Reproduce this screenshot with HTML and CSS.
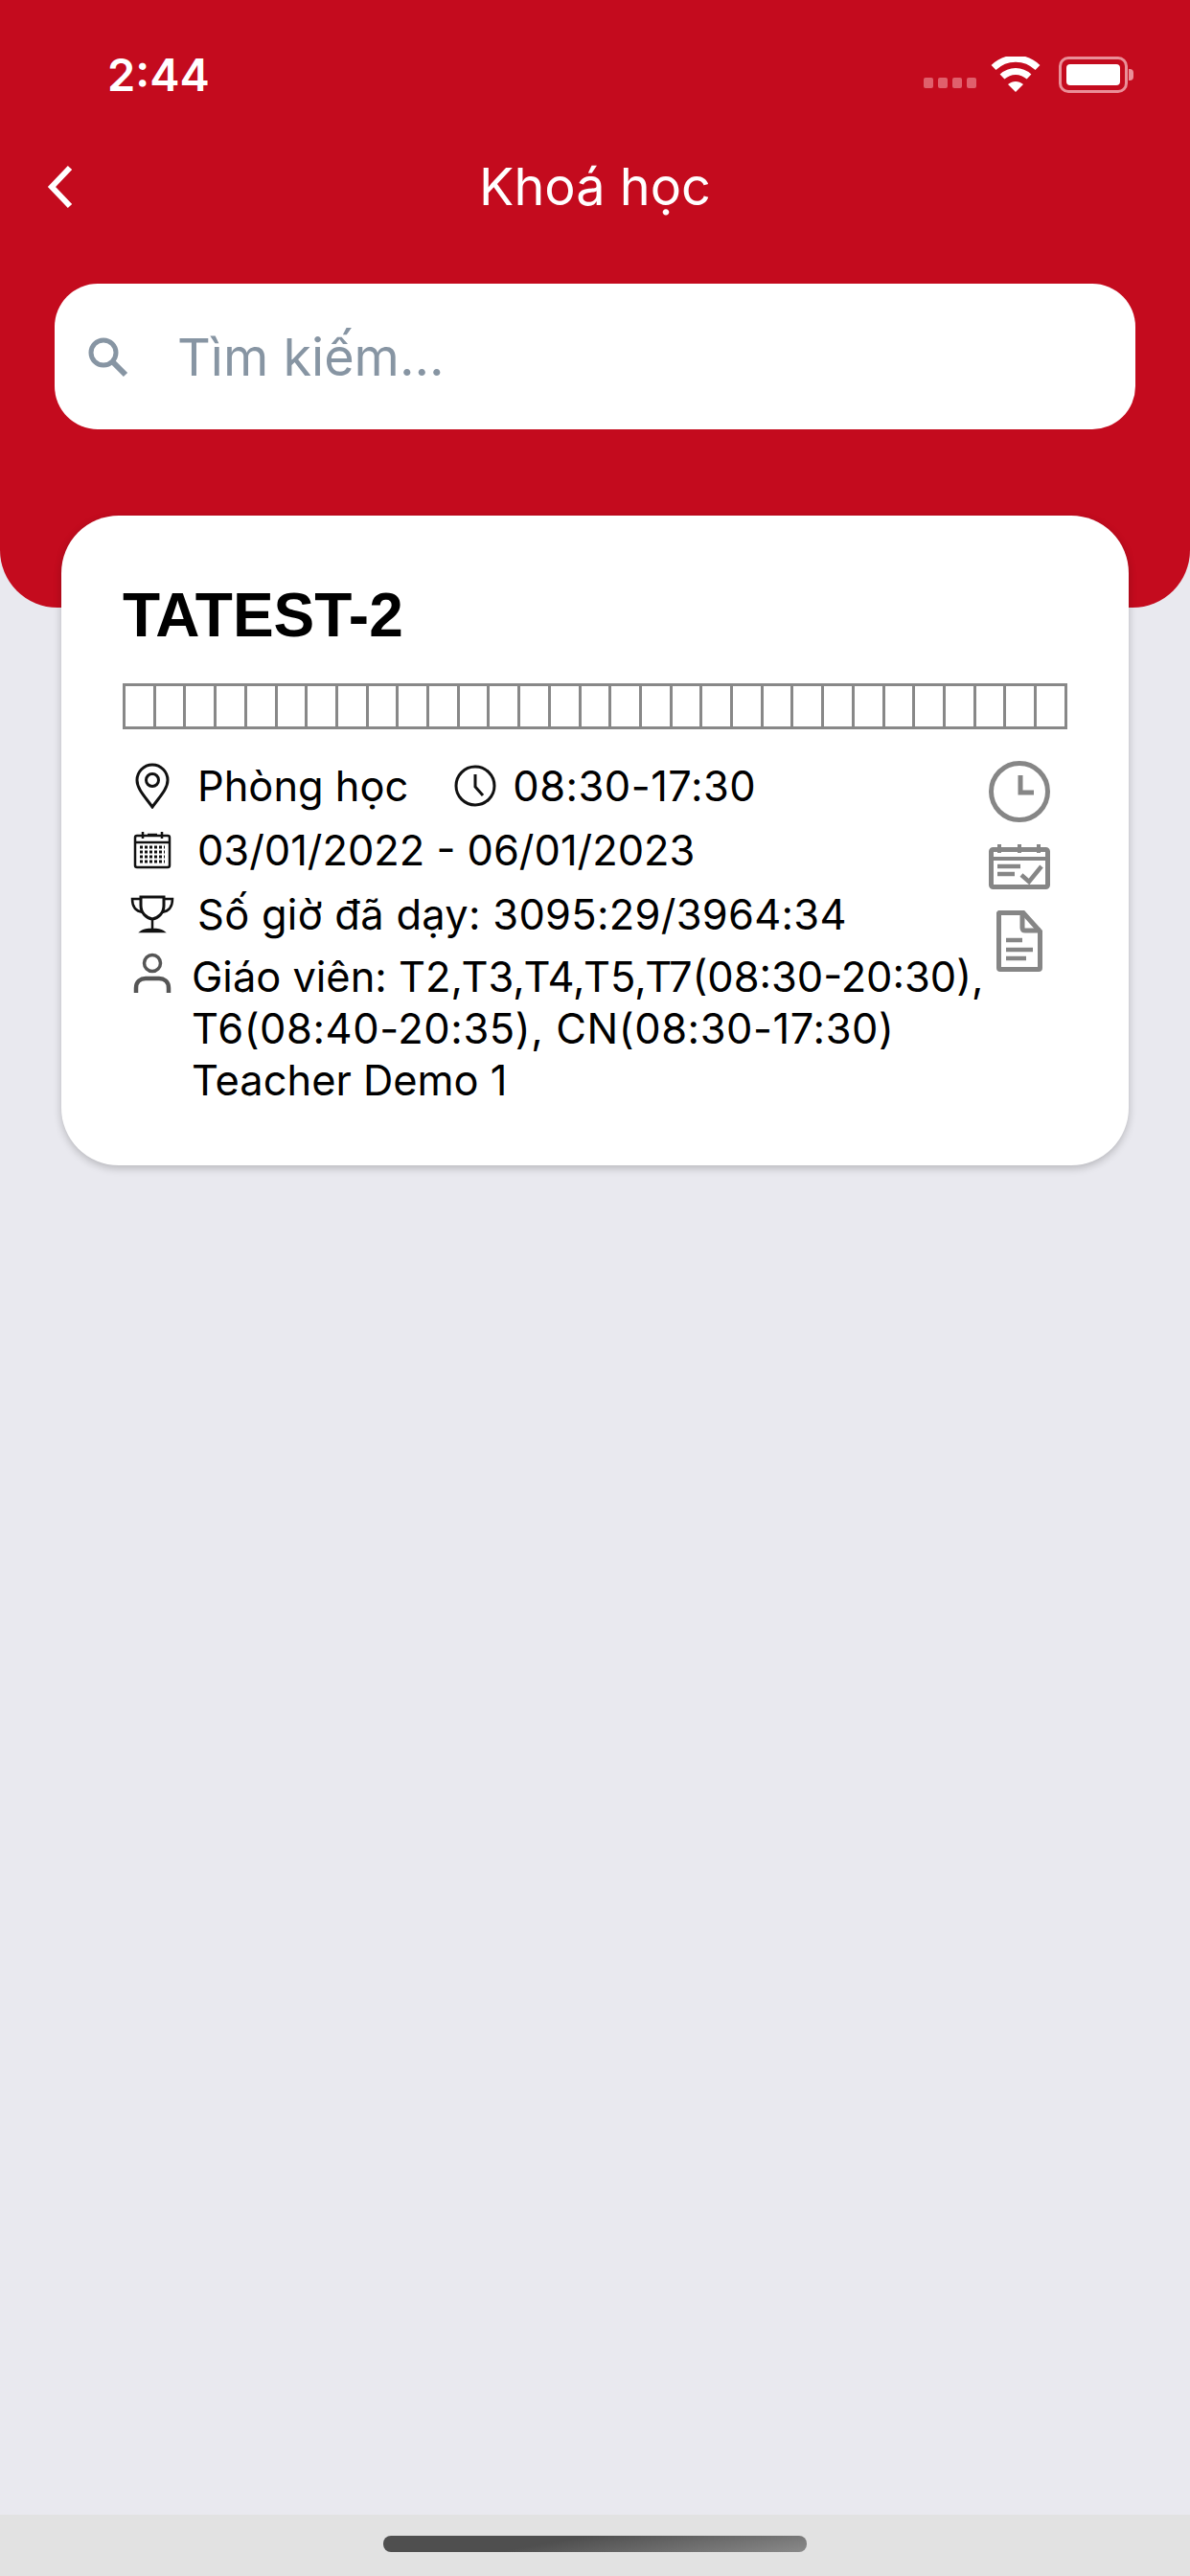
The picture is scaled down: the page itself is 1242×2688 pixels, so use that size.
FILE: index.html
```html
<!DOCTYPE html>
<html lang="vi">

<head>
  <meta charset="UTF-8">
  <meta name="viewport" content="width=device-width, initial-scale=1.0">
  <title>Khoá học</title>
  <link rel="stylesheet" href="styles.css">
</head>

<body>
  <div class="screen">
    <header class="header">
      <div class="status-bar">
        <span class="time">2:44</span>
        <div class="status-icons">
          <div class="signal"><i></i><i></i><i></i><i></i></div>
          <svg class="wifi" width="52" height="38" viewBox="0 0 52 38">
            <path d="M3 11.5C16-1 36-1 49 11.5" fill="none" stroke="#fff" stroke-width="7" />
            <path d="M12 21C20 13.5 32 13.5 40 21" fill="none" stroke="#fff" stroke-width="7" />
            <path d="M18 29C23 25 29 25 34 29L26 37Z" fill="#fff" />
          </svg>
          <div class="battery">
            <div class="battery-level"></div>
          </div>
        </div>
      </div>

      <div class="nav">
        <svg class="back" width="30" height="46" viewBox="0 0 30 46">
          <path d="M25 3L6 23L25 43" fill="none" stroke="#fff" stroke-width="6" />
        </svg>
        <h1>Khoá học</h1>
      </div>

      <div class="search">
        <svg width="46" height="46" viewBox="0 0 46 46">
          <circle cx="19" cy="19" r="13" fill="none" stroke="#8795a3" stroke-width="5" />
          <path d="M28 28L42 42" stroke="#8795a3" stroke-width="6" />
        </svg>
        <span>Tìm kiếm...</span>
      </div>
    </header>

    <main class="content">
      <section class="card">
        <h2>TATEST-2</h2>
        <div class="progress" id="progress"></div>

        <div class="card-body">
          <div class="info">
            <div class="row">
              <span class="row-icon">
                <svg width="40" height="48" viewBox="0 0 40 48">
                  <path d="M20 46C12 35 4 27 4 18a16 16 0 0 1 32 0C36 27 28 35 20 46Z" fill="none" stroke="#111" stroke-width="3" />
                  <circle cx="20" cy="18" r="6.5" fill="none" stroke="#111" stroke-width="3" />
                </svg>
              </span>
              <span>Phòng học</span>
              <svg class="clock-small" width="46" height="46" viewBox="0 0 46 46">
                <circle cx="23" cy="23" r="20" fill="none" stroke="#111" stroke-width="3" />
                <path d="M23 11V24L31 33" fill="none" stroke="#111" stroke-width="3" />
              </svg>
              <span class="hours">08:30-17:30</span>
            </div>

            <div class="row">
              <span class="row-icon">
                <svg width="40" height="40" viewBox="0 0 40 40">
                  <rect x="2" y="5" width="36" height="33" rx="2" fill="none" stroke="#111" stroke-width="2.5" />
                  <path d="M2 12H38M10 1V8M30 1V8M15 4H25" fill="none" stroke="#111" stroke-width="2.5" />
                  <path d="M7 17H33M7 22H33M7 27H33M7 32H33" fill="none" stroke="#111" stroke-width="3" stroke-dasharray="3 2" />
                </svg>
              </span>
              <span>03/01/2022 - 06/01/2023</span>
            </div>

            <div class="row">
              <span class="row-icon">
                <svg width="46" height="40" viewBox="0 0 46 40">
                  <path d="M11 2H35V11C35 19 29 24 23 25C17 24 11 19 11 11Z" fill="none" stroke="#111" stroke-width="3" />
                  <path d="M11 4H2C2 12 6 17 13 18M35 4H44C44 12 40 17 33 18" fill="none" stroke="#111" stroke-width="2.5" />
                  <path d="M23 25V36M12 38C16 35 30 35 34 38Z" fill="#111" stroke="#111" stroke-width="2.5" />
                </svg>
              </span>
              <span class="hours-taught">Số giờ đã dạy: 3095:29/3964:34</span>
            </div>

            <div class="row row-teacher">
              <span class="row-icon">
                <svg width="40" height="44" viewBox="0 0 40 44">
                  <circle cx="20" cy="11" r="8.5" fill="none" stroke="#555" stroke-width="3.5" />
                  <path d="M3 42V37C3 30 8 27 13 27H27C32 27 37 30 37 37V42" fill="none" stroke="#555" stroke-width="4.5" />
                </svg>
              </span>
              <p>Giáo viên: T2,T3,T4,T5,T7(08:30-20:30),<br><span class="schedule-line">T6(08:40-20:35), CN(08:30-17:30)</span><br>Teacher Demo 1</p>
            </div>
          </div>

          <div class="actions">
            <svg width="64" height="64" viewBox="0 0 64 64">
              <circle cx="32" cy="32" r="29.5" fill="none" stroke="#868686" stroke-width="5" />
              <path d="M33 15V33H47" fill="none" stroke="#868686" stroke-width="5" />
            </svg>
            <svg width="64" height="48" viewBox="0 0 64 48">
              <rect x="2.5" y="6.5" width="59" height="39" rx="2" fill="none" stroke="#868686" stroke-width="5" />
              <path d="M2 16H62M11 1V10M32 1V10M52 1V10" fill="none" stroke="#868686" stroke-width="4" />
              <path d="M9 24H33M9 32H27" fill="none" stroke="#868686" stroke-width="4.5" />
              <path d="M34 33L42 40L55 24" fill="none" stroke="#868686" stroke-width="4.5" />
            </svg>
            <svg width="48" height="64" viewBox="0 0 48 64">
              <path d="M3 2.5H28L45.5 22V60C45.5 61 45 61.5 44 61.5H4C3 61.5 2.5 61 2.5 60V3Z" fill="none" stroke="#868686" stroke-width="5" />
              <path d="M27 2V18C27 20 28 21 30 21H46" fill="none" stroke="#868686" stroke-width="5" />
              <path d="M10 31H27M10 41H38M10 50H31" fill="none" stroke="#868686" stroke-width="4.5" />
            </svg>
          </div>
        </div>
      </section>
    </main>

    <div class="home-bar">
      <div class="home-indicator"></div>
    </div>
  </div>

  <script>
    // progress bar is 31 empty cells
    const progress = document.getElementById('progress');
    for (let i = 0; i < 31; i++) {
      progress.appendChild(document.createElement('div'));
    }
  </script>
</body>

</html>
```

FILE: styles.css
```css
* {
  box-sizing: border-box;
}

body {
  margin: 0;
  font-family: Inter, "Noto Sans", sans-serif;
  background-color: #e9e9ef;
  color: #000;
}

.screen {
  width: 1242px;
  height: 2688px;
  display: flex;
  flex-direction: column;
  overflow: hidden;
}

.header {
  height: 634px;
  flex-shrink: 0;
  background-color: #c40b1e;
  border-radius: 0 0 60px 60px;
  padding-top: 50px;
  color: #fff;
}

.status-bar {
  height: 56px;
  display: flex;
  align-items: center;
  justify-content: space-between;
  padding: 0 65px 0 112px;
}

.time {
  font-size: 47px;
  font-weight: 600;
  line-height: 56px;
}

.status-icons {
  display: flex;
  align-items: center;
}

.signal {
  display: flex;
  gap: 5px;
  margin: 16px 15px 0 0;
}

.signal i {
  width: 10px;
  height: 11px;
  border-radius: 2px;
  background-color: #e0606c;
}

.wifi {
  margin-right: 19px;
}

.battery {
  position: relative;
  width: 72px;
  height: 38px;
  padding: 5px;
  border: 3px solid #ea8f98;
  border-radius: 10px;
}

.battery:after {
  content: "";
  position: absolute;
  right: -9px;
  top: 10px;
  width: 5px;
  height: 12px;
  border-radius: 0 4px 4px 0;
  background-color: #ea8f98;
}

.battery-level {
  height: 100%;
  border-radius: 4px;
  background-color: #fff;
}

.nav {
  position: relative;
  height: 66px;
  margin-top: 56px;
  display: flex;
  align-items: center;
  justify-content: center;
}

.back {
  position: absolute;
  left: 48px;
  top: 10px;
}

.nav h1 {
  margin: 0;
  font-size: 54px;
  font-weight: 400;
  line-height: 66px;
}

.search {
  width: 1128px;
  height: 152px;
  margin: 68px 0 0 57px;
  padding-left: 32px;
  display: flex;
  align-items: center;
  gap: 50px;
  background-color: #fff;
  border-radius: 45px;
  color: #8795a3;
  font-size: 54px;
}

.content {
  flex: 1;
  padding: 0 64px;
}

.card {
  height: 678px;
  margin-top: -96px;
  position: relative;
  padding: 67px 64px 0;
  background-color: #fff;
  border-radius: 60px;
  box-shadow: 0 3px 8px rgba(0, 0, 0, 0.22);
}

.card h2 {
  margin: 0;
  font-family: "Liberation Sans", sans-serif;
  font-size: 64px;
  font-weight: 700;
  line-height: 74px;
}

.progress {
  height: 48px;
  margin-top: 34px;
  display: flex;
  border: 3px solid #888;
  background-color: #888;
  gap: 3px;
}

.progress div {
  flex: 1;
  background-color: #fff;
}

.card-body {
  display: flex;
  justify-content: space-between;
  margin-top: 25px;
}

.info {
  width: 920px;
  font-size: 43.4px;
  line-height: 54px;
}

.row {
  min-height: 67px;
  display: flex;
  align-items: center;
}

.row-icon {
  width: 78px;
  flex-shrink: 0;
  display: flex;
  justify-content: center;
  padding-right: 16px;
}

.clock-small {
  margin: 0 16px 0 47px;
}

.hours {
  letter-spacing: 0.5px;
}

.hours-taught {
  letter-spacing: 0.3px;
}

.schedule-line {
  letter-spacing: 0.6px;
}

.row-teacher {
  align-items: flex-start;
  margin-top: 5px;
}

.row-teacher .row-icon {
  width: 72px;
  padding: 2px 10px 0 0;
}

.row-teacher p {
  margin: 0;
  width: 860px;
}

.actions {
  width: 64px;
  margin: 8px 0 0;
  display: flex;
  flex-direction: column;
  align-items: center;
  gap: 22px;
  transform: translateX(-18px);
}

.home-bar {
  height: 64px;
  flex-shrink: 0;
  display: flex;
  justify-content: center;
  padding-top: 22px;
  background-color: #e2e2e2;
}

.home-indicator {
  width: 442px;
  height: 17px;
  border-radius: 8px;
  background: linear-gradient(170deg, #4f4f4f 40%, #8a8a8a 100%);
}
```
